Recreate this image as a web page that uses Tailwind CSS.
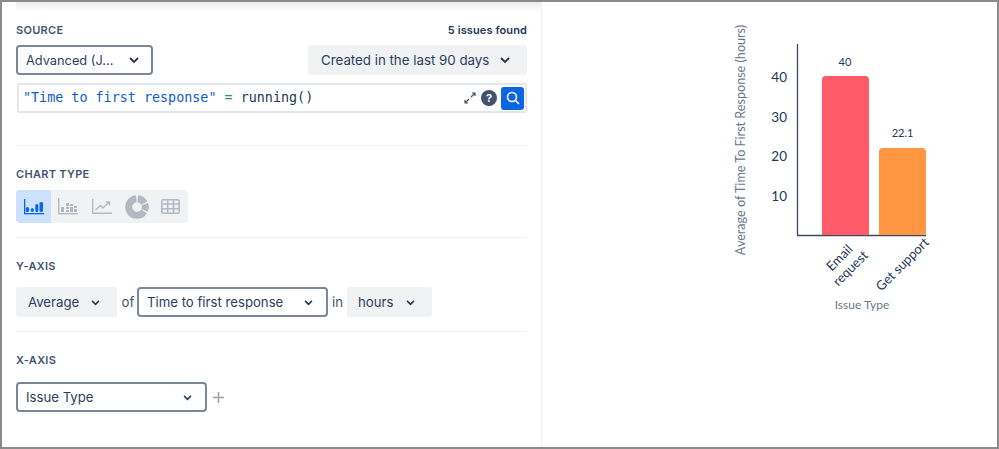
<!DOCTYPE html>
<html>
<head>
<script src="https://cdn.jsdelivr.net/npm/@tailwindcss/browser@4"></script>
</head>
<body class="bg-white">
<div class="w-[999px] h-[449px] border-2 border-[#8a8a8a] flex overflow-hidden bg-white font-['Inter','Liberation_Sans',sans-serif] text-[#2c3e5d]">
  <div class="w-[540px] shrink-0 h-full border-r border-[#f1f2f4] relative pl-[14px] pr-[14px]">
    <div class="absolute left-[14px] right-0 top-0 h-[10px] bg-gradient-to-b from-[#eceef1] to-white"></div>
    <div class="flex justify-between items-center h-[16px] mt-[20px]">
      <span class="text-[11px] font-semibold tracking-[0.3px] text-[#44546f] leading-none">SOURCE</span>
      <span class="text-[11px] font-semibold tracking-[0.1px] text-[#253858] leading-none">5 issues found</span>
    </div>
    <div class="flex justify-between mt-[7px]">
      <div class="w-[137px] h-[30px] border-2 border-[#7a8699] rounded-[4px] flex items-center justify-between pl-[8px] pr-[12px] pt-[1px] text-[12.8px]">
        <span>Advanced (J...</span>
        <svg width="10" height="7" viewBox="0 0 10 7" fill="none" stroke="#253858" stroke-width="1.8"><path d="M1 1l4 4 4-4"/></svg>
      </div>
      <div class="w-[219px] h-[30px] bg-[#f1f2f4] rounded-[3px] flex items-center justify-between pl-[13px] pr-[17px] pt-[1px] text-[13.3px]">
        <span>Created in the last 90 days</span>
        <svg width="10" height="7" viewBox="0 0 10 7" fill="none" stroke="#253858" stroke-width="1.8"><path d="M1 1l4 4 4-4"/></svg>
      </div>
    </div>
    <div class="ml-[1px] mt-[8px] h-[30px] border-2 border-[#e3e6ea] rounded-[3px] flex items-center pl-[4px] pr-[1px] font-['DejaVu_Sans_Mono',monospace] text-[13.4px]">
      <span class="text-[#0b5ccf]">"Time to first response"</span><span class="text-[#2f8f6a] whitespace-pre"> = </span><span class="text-[#253858]">running()</span>
      <svg class="ml-auto" width="12" height="12" viewBox="0 0 12 12" fill="none" stroke="#44546f" stroke-width="1.2"><path d="M7 5l4-4M8 1h3v3M5 7l-4 4M1 8v3h3"/></svg>
      <span class="ml-[5px] w-[16px] h-[16px] rounded-full bg-[#42526e] text-white text-[11px] font-bold flex items-center justify-center font-['Inter',sans-serif]">?</span>
      <span class="ml-[4px] w-[23px] h-[23px] rounded-[3px] bg-[#0b66e4] flex items-center justify-center">
        <svg width="14" height="14" viewBox="0 0 14 14" fill="none" stroke="#fff" stroke-width="1.6"><circle cx="6" cy="6" r="4.5"/><path d="M9.5 9.5L13 13"/></svg>
      </span>
    </div>
    <div class="h-px bg-[#f1f2f4] mt-[32px]"></div>

    <div class="text-[11px] font-semibold tracking-[0.3px] text-[#44546f] leading-none mt-[23px]">CHART TYPE</div>
    <div class="flex w-[172px] h-[33px] mt-[10px] bg-[#f1f2f4] rounded-[4px] overflow-hidden">
      <span class="w-[35px] bg-[#cce0ff] flex items-center justify-center">
        <svg width="20" height="16" viewBox="0 0 20 16" fill="#0b66e4"><rect x="1.8" y="8" width="3.2" height="5" rx="1.5"/><rect x="6.8" y="9" width="3" height="4" rx="1.5"/><rect x="11.3" y="5" width="3" height="8" rx="1.5"/><rect x="15.5" y="3" width="3.5" height="10" rx="1.5"/><rect x="0" y="0" width="1.3" height="15"/><rect x="0" y="14" width="20" height="1.3"/></svg>
      </span>
      <span class="w-[34px] flex items-center justify-center">
        <svg width="20" height="17" viewBox="0 0 20 17" fill="#b3b9c4"><rect x="0" y="0" width="1.4" height="16"/><rect x="0" y="15" width="20" height="1.4"/><rect x="3" y="9" width="3" height="5"/><rect x="8" y="5" width="3" height="3"/><rect x="8" y="9" width="3" height="2"/><rect x="8" y="12" width="3" height="2"/><rect x="16" y="8" width="3" height="2"/><rect x="16" y="11" width="3" height="3"/><rect x="12" y="6" width="3" height="2"/><rect x="12" y="9" width="3" height="5"/></svg>
      </span>
      <span class="w-[34px] flex items-center justify-center">
        <svg width="20" height="15" viewBox="0 0 20 15" fill="none" stroke="#b3b9c4" stroke-width="1.4"><path d="M.7 0v14.3H20"/><path d="M3.5 11l5-4.5 2.5 2.5 6-6M14 3h3.5v3.5"/></svg>
      </span>
      <span class="w-[36px] flex items-center justify-center">
        <svg width="24" height="24" viewBox="0 0 24 24" fill="none" stroke="#b3b9c4" stroke-width="7"><path d="M19.04 16.4A8.3 8.3 0 1 1 11.28 3.73"/><path d="M12.72 3.73A8.3 8.3 0 0 1 19.33 8.1"/><path d="M19.8 9.16A8.3 8.3 0 0 1 19.58 15.38"/></svg>
      </span>
      <span class="w-[33px] flex items-center justify-center pr-[2px]">
        <svg width="19" height="15" viewBox="0 0 19 15" fill="none" stroke="#b3b9c4" stroke-width="1.6"><rect x=".8" y=".8" width="17.4" height="13.4" rx="1.5"/><path d="M.8 5h17.4M.8 9.7h17.4M6.7 1v13M12.5 1v13"/></svg>
      </span>
    </div>
    <div class="h-px bg-[#f1f2f4] mt-[14px]"></div>

    <div class="text-[11px] font-semibold tracking-[0.3px] text-[#44546f] leading-none mt-[23px]">Y-AXIS</div>
    <div class="flex items-center mt-[15px] text-[13.2px]">
      <div class="w-[101px] h-[30px] bg-[#f1f2f4] rounded-[3px] flex items-center justify-between pl-[12px] pr-[17px] pt-[1px]">
        <span>Average</span>
        <svg width="9" height="6" viewBox="0 0 10 7" fill="none" stroke="#253858" stroke-width="1.8"><path d="M1 1l4 4 4-4"/></svg>
      </div>
      <span class="ml-[3px] w-[16px] pt-[1px] text-[#44546f] text-center">of</span>
      <div class="w-[191px] h-[30px] ml-[1px] border-2 border-[#7a8699] rounded-[4px] flex items-center justify-between pl-[8px] pr-[13px] pt-[1px]">
        <span>Time to first response</span>
        <svg width="9" height="6" viewBox="0 0 10 7" fill="none" stroke="#253858" stroke-width="1.8"><path d="M1 1l4 4 4-4"/></svg>
      </div>
      <span class="w-[19px] pt-[1px] text-[#44546f] text-center">in</span>
      <div class="w-[85px] h-[30px] bg-[#f1f2f4] rounded-[3px] flex items-center justify-between pl-[11px] pr-[17px] pt-[1px]">
        <span>hours</span>
        <svg width="9" height="6" viewBox="0 0 10 7" fill="none" stroke="#253858" stroke-width="1.8"><path d="M1 1l4 4 4-4"/></svg>
      </div>
    </div>
    <div class="h-px bg-[#f1f2f4] mt-[14px]"></div>

    <div class="text-[11px] font-semibold tracking-[0.3px] text-[#44546f] leading-none mt-[23px]">X-AXIS</div>
    <div class="flex items-center mt-[16px] text-[13.2px]">
      <div class="w-[191px] h-[30px] border-2 border-[#7a8699] rounded-[4px] flex items-center justify-between pl-[8px] pr-[13px] pt-[1px]">
        <span>Issue Type</span>
        <svg width="9" height="6" viewBox="0 0 10 7" fill="none" stroke="#253858" stroke-width="1.8"><path d="M1 1l4 4 4-4"/></svg>
      </div>
      <svg class="ml-[6px]" width="11" height="11" viewBox="0 0 11 11" stroke="#9a9fa8" stroke-width="1.5"><path d="M5.5 0v11M0 5.5h11"/></svg>
    </div>
  </div>

  <div class="relative flex-1">
    <svg class="absolute left-[-542px] top-[-2px]" width="999" height="449" viewBox="0 0 999 449" font-family="Lato, sans-serif">
      <path d="M797.5 44V235.5H926" fill="none" stroke="#3d4a66" stroke-width="1.3"/>
      <path d="M822 235V80a4 4 0 0 1 4-4h39a4 4 0 0 1 4 4v155z" fill="#ff5a67"/>
      <path d="M879 235V152a4 4 0 0 1 4-4h39a4 4 0 0 1 4 4v83z" fill="#ff9642"/>
      <g fill="#253858" font-size="13.5" text-anchor="end">
        <text x="787" y="82">40</text>
        <text x="787" y="122">30</text>
        <text x="787" y="161">20</text>
        <text x="787" y="201">10</text>
      </g>
      <g fill="#253858" font-size="11" text-anchor="middle">
        <text x="845" y="66">40</text>
        <text x="902.5" y="137">22.1</text>
      </g>
      <g fill="#253858" font-size="13" text-anchor="middle">
        <text transform="translate(842.5 261) rotate(-45)">Email</text>
        <text transform="translate(853.5 271.5) rotate(-45)">request</text>
        <text transform="translate(905.5 267.5) rotate(-45)">Get support</text>
      </g>
      <text transform="translate(745 140) rotate(-90)" fill="#6b778c" font-size="12.6" text-anchor="middle">Average of Time To First Response (hours)</text>
      <text x="862" y="309" fill="#6b778c" font-size="12" text-anchor="middle">Issue Type</text>
    </svg>
  </div>
</div>
</body>
</html>
